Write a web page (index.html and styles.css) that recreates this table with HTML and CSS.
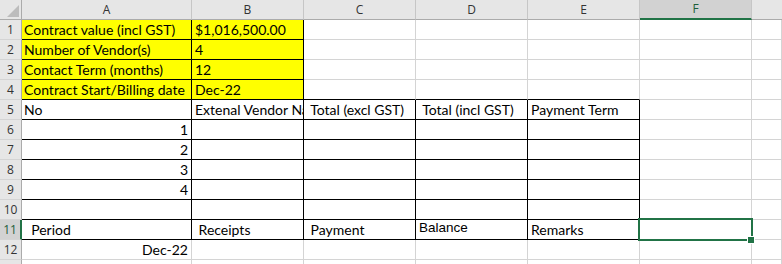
FILE: index.html
```html
<!DOCTYPE html>
<html>
<head>
<meta charset="utf-8">
<link rel="stylesheet" href="styles.css">
</head>
<body>
<div class="sheet">
  <div class="corner"><svg class="tri" width="12" height="12" viewBox="0 0 12 12"><polygon points="12,0 12,12 0,12" fill="#bcbcbc"/></svg></div>
  <div class="ch">A</div><div class="ch">B</div><div class="ch">C</div><div class="ch">D</div><div class="ch">E</div><div class="ch sel">F</div><div class="ch last"></div>

  <div class="rh">1</div><div class="c y br bb">Contract value (incl GST)</div><div class="c y br bb pl">$1,016,500.00</div><div class="c"></div><div class="c"></div><div class="c"></div><div class="c"></div><div class="c"></div>
  <div class="rh">2</div><div class="c y br bb">Number of Vendor(s)</div><div class="c y br bb pl">4</div><div class="c"></div><div class="c"></div><div class="c"></div><div class="c"></div><div class="c"></div>
  <div class="rh">3</div><div class="c y br bb">Contact Term (months)</div><div class="c y br bb pl">12</div><div class="c"></div><div class="c"></div><div class="c"></div><div class="c"></div><div class="c"></div>
  <div class="rh">4</div><div class="c y br bb">Contract Start/Billing date</div><div class="c y br bb pl">Dec-22</div><div class="c bb"></div><div class="c bb"></div><div class="c bb"></div><div class="c"></div><div class="c"></div>

  <div class="rh">5</div><div class="c br bb">No</div><div class="c br bb pl">Extenal Vendor Na</div><div class="c br bb pl"> Total (excl GST)</div><div class="c br bb pl"> Total (incl GST)</div><div class="c br bb pl">Payment Term</div><div class="c"></div><div class="c"></div>
  <div class="rh">6</div><div class="c br bb r">1</div><div class="c br bb"></div><div class="c br bb"></div><div class="c br bb"></div><div class="c br bb"></div><div class="c"></div><div class="c"></div>
  <div class="rh">7</div><div class="c br bb r">2</div><div class="c br bb"></div><div class="c br bb"></div><div class="c br bb"></div><div class="c br bb"></div><div class="c"></div><div class="c"></div>
  <div class="rh">8</div><div class="c br bb r">3</div><div class="c br bb"></div><div class="c br bb"></div><div class="c br bb"></div><div class="c br bb"></div><div class="c"></div><div class="c"></div>
  <div class="rh">9</div><div class="c br bb r">4</div><div class="c br bb"></div><div class="c br bb"></div><div class="c br bb"></div><div class="c br bb"></div><div class="c"></div><div class="c"></div>
  <div class="rh">10</div><div class="c br bb"></div><div class="c br bb"></div><div class="c br bb"></div><div class="c br bb"></div><div class="c br bb"></div><div class="c"></div><div class="c"></div>
  <div class="rh sel">11</div><div class="c br bb">  Period</div><div class="c br bb pl"> Receipts</div><div class="c br bb pl"> Payment</div><div class="c br bb pl bal">Balance</div><div class="c br bb pl">Remarks</div><div class="c active"><span class="selbox"></span><span class="handle"></span></div><div class="c"></div>
  <div class="rh">12</div><div class="c r">Dec-22</div><div class="c"></div><div class="c"></div><div class="c"></div><div class="c"></div><div class="c"></div><div class="c"></div>
  <div class="rh"></div><div class="c"></div><div class="c"></div><div class="c"></div><div class="c"></div><div class="c"></div><div class="c"></div><div class="c"></div>
</div>
</body>
</html>
```
FILE: styles.css
```css
html, body {
  margin: 0;
  padding: 0;
  background: #fff;
  overflow: hidden;
  width: 782px;
  height: 264px;
}
.sheet {
  display: grid;
  grid-template-columns: 22px 170px 112px 112px 112px 112px 112px 1fr;
  grid-auto-rows: 20px;
  width: 782px;
  height: 264px;
  overflow: hidden;
}
.corner {
  background: #e6e6e6;
  border-right: 1px solid #ababab;
  border-bottom: 1px solid #ababab;
  box-sizing: border-box;
  position: relative;
}
.tri {
  position: absolute;
  right: 2px;
  bottom: 2px;
}
.ch {
  background: #e6e6e6;
  border-right: 1px solid #c6c6c6;
  border-bottom: 1px solid #ababab;
  box-sizing: border-box;
  font: 12px/19px "Open Sans", sans-serif;
  color: #333;
  text-align: center;
}
.ch.sel {
  background: #d2d2d2;
  color: #1d5e3a;
  border-bottom: 2px solid #217346;
  line-height: 18px;
}
.ch.last { border-right: none; }
.rh {
  background: #e6e6e6;
  border-right: 1px solid #ababab;
  border-bottom: 1px solid #d4d4d4;
  box-sizing: border-box;
  font: 12px/20px "Open Sans", sans-serif;
  color: #333;
  text-align: center;
}
.rh.sel {
  background: #d2d2d2;
  color: #1d5e3a;
  border-right: 2px solid #217346;
}
.c {
  border-right: 1px solid #d4d4d4;
  border-bottom: 1px solid #d4d4d4;
  box-sizing: border-box;
  overflow: hidden;
  white-space: pre;
  font: 14px/20px Lato, "Open Sans", sans-serif;
  color: #000;
  padding: 0 2px;
}
.pl { padding-left: 3px; }
.y { background: #ffff00; }
.br { border-right-color: #000; }
.bb { border-bottom-color: #000; }
.r { text-align: right; padding-right: 3px; }
.bal {
  font: 13.5px/15px "Liberation Sans", Arial, sans-serif;
}
.active {
  position: relative;
  overflow: visible;
}
.selbox {
  position: absolute;
  left: -2px;
  top: -2px;
  width: 115px;
  height: 23px;
  border: 2px solid #217346;
  box-sizing: border-box;
}
.handle {
  position: absolute;
  left: 107px;
  top: 16px;
  width: 6px;
  height: 6px;
  background: #217346;
  border: 1px solid #fff;
}
```
